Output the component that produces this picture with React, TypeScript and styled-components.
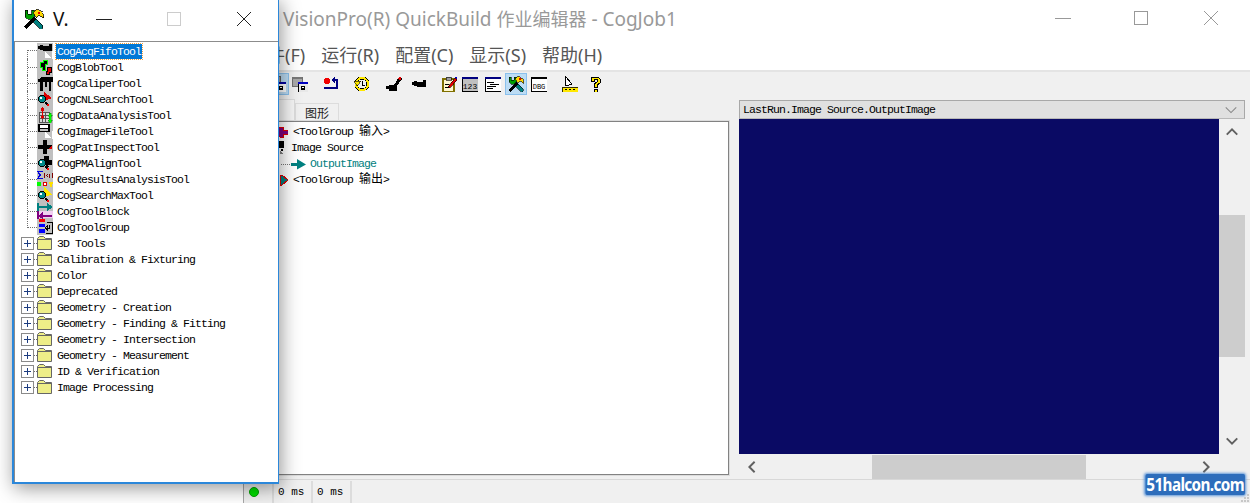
import React from "react";
import styled, { createGlobalStyle } from "styled-components";

const GlobalStyle = createGlobalStyle`
  html, body {
    margin: 0;
    height: 100%;
    background: #fff;
    overflow: hidden;
  }
  #root {
    width: 1250px;
    height: 503px;
    position: relative;
    overflow: hidden;
  }
`;

const UI_FONT = `"Noto Sans", "Noto Sans CJK SC", sans-serif`;
const BITMAP_FONT = `"Liberation Mono", "Noto Sans CJK SC", monospace`;

/* ---------- pixel icons ---------- */

const PixelSvg = styled.svg<{ $bg?: string }>`
  display: block;
  flex: none;
  shape-rendering: crispEdges;
  background: ${({ $bg }) => $bg || "transparent"};
`;

const Icon: React.FC<{ size?: number; bg?: string; children: React.ReactNode }> = ({
  size = 16,
  bg,
  children,
}) => (
  <PixelSvg width={size} height={size} viewBox="0 0 16 16" $bg={bg}>
    {children}
  </PixelSvg>
);

const Magnifier = () => (
  <>
    <circle cx="5" cy="8" r="3.6" fill="#008b8b" stroke="#000" strokeWidth="1.4" />
    <rect x="3" y="6" width="2" height="2" fill="#fff" />
    <path d="M8 11h2v1h1v1h1v2h-2v-1H9v-1H8z" fill="#000" />
    <rect x="10" y="13" width="2" height="2" fill="#f00" />
  </>
);

const SelectArrow = () => (
  <path d="M8 9h1v1h1v1h1v1h1v1h1v1h1v1H8zM15 8h1v8h-1z" fill="#fff" />
);

const Hammers = () => (
  <>
    <path d="M6 7l2-1 7 7v2l-1 1h-1L6 9z" fill="#008080" stroke="#000" strokeWidth="0.6" />
    <path d="M1 1h2v3h3V1h2v5L6 8H3L1 6z" fill="#00a000" stroke="#000" strokeWidth="0.6" />
    <path d="M8 6l2 2-8 8-2-2z" fill="#000" />
    <path d="M7 3l3-3 5 3 1 4h-1l-3-2-2 2z" fill="#ffd800" stroke="#000" strokeWidth="0.6" />
    <rect x="11" y="2" width="2" height="2" fill="#e00000" />
  </>
);

const toolIcons: Record<string, React.ReactNode> = {
  acq: (
    <>
      <path d="M3 2h3v1h6V1h3v7H6V7H3zM1 3h2v3H1z" fill="#000" />
      <SelectArrow />
    </>
  ),
  blob: (
    <>
      <path d="M3 3h3V1h4v4H8v6H5V8H3z" fill="#000" stroke="#0f0" strokeWidth="1" />
      <path d="M10 8h4v5h-2v2H9v-3h1z" fill="#e00000" stroke="#000" strokeWidth="1" />
    </>
  ),
  caliper: <path d="M4 2h12v5h-2v9h-2V7h-2v5H8V7H6v9H3V7H1V4h2z" fill="#000" />,
  cnl: (
    <>
      <path d="M7 1l8 6-6 2-1 2z" fill="#e00000" />
      <Magnifier />
    </>
  ),
  data: (
    <>
      <path d="M2 5h10v10H2zM2 8h10M2 11h10M5 5v10M8 5v10" fill="#d8d8d8" stroke="#555" strokeWidth="1" />
      <path d="M5 0h1v1h1v3H6v5h1v2H6v1H5v-1H4V9h1V4H4V1h1z" fill="#e00000" />
      <path d="M12 6h2v2h1v1h-1v4h1v1h-1v2h-2v-2h-1v-1h1V9h-1V8h1z" fill="#0f0" stroke="#008000" strokeWidth="0.4" />
    </>
  ),
  file: (
    <>
      <path d="M1 1h11l1 1v7H1z" fill="#000" />
      <rect x="3" y="2" width="8" height="3" fill="#fff" />
      <rect x="3" y="6" width="8" height="2" fill="#c0c0c0" />
      <SelectArrow />
    </>
  ),
  pat: (
    <>
      <path d="M6 1h4v5h5v4h-5v5H6v-5H1V6h5z" fill="#000" />
      <path d="M11 6h4v4h-4z" fill="#e00000" />
      <path d="M11 6h4L11 10z" fill="#000" />
    </>
  ),
  pm: (
    <>
      <path d="M7 1h5v4h3v5h-4l1 2h-3V8H6V4h1z" fill="#000" />
      <Magnifier />
    </>
  ),
  results: (
    <>
      <path d="M0 0h6v1H2l2 3-2 3h4v1H0l2-4z" fill="#0000e0" />
      <rect x="0" y="11" width="4" height="4" fill="#0f0" />
      <rect x="6" y="11" width="4" height="4" fill="#e00000" />
      <rect x="7" y="12" width="2" height="2" fill="#fff" />
      <path d="M12 11h4v2h-1v3h-2v-3h-1z" fill="#ffe000" />
      <path d="M7 2h1v5H7zM15 2h1v5h-1zM9 4h1v1H9zM10 3h1v1h-1zM10 5h1v1h-1zM12 3h1v4h-1z" fill="#800000" />
    </>
  ),
  search: (
    <>
      <path d="M7 0l8 8-6 1-1 2z" fill="#ffe800" />
      <Magnifier />
    </>
  ),
  block: (
    <>
      <rect x="0" y="0" width="2" height="16" fill="#008080" />
      <rect x="0" y="8" width="2" height="8" fill="#800080" />
      <rect x="2" y="8" width="14" height="7" fill="#f0d0f0" />
      <path d="M2 3h8V0l6 4-6 4V5H2z" fill="#008080" />
      <path d="M6 9v3h9v2H6v2l-5-3z" fill="#800080" />
    </>
  ),
  group: (
    <>
      <rect x="2" y="0" width="6" height="3" fill="#f00" />
      <rect x="2" y="5" width="6" height="3" fill="#00f" />
      <rect x="2" y="10" width="6" height="4" fill="#00f" />
      <path d="M10 3h5v11H9" fill="none" stroke="#000" />
      <path d="M9 9h3V6M8 9l2-2v4z" fill="none" stroke="#000" />
    </>
  ),
  input: <path d="M8 3h3v3h5v4h-5v3H8l-4-5z" fill="#800080" stroke="#e00000" strokeWidth="1" />,
  source: (
    <>
      <path d="M9 1h5v7H9zM11 9h2v2h-2z" fill="#000" />
      <path d="M10 11h1v1h1v1h1v1h-3z" fill="#808080" />
    </>
  ),
  output: <path d="M8 3h2l6 5-6 5H8z" fill="#008080" stroke="#e00000" strokeWidth="1" />,
};

const IconLabel = styled.text<{ $narrow?: boolean }>`
  font-family: "Liberation Mono", monospace;
  font-size: ${({ $narrow }) => ($narrow ? 7 : 8)}px;
  fill: #000;
  shape-rendering: auto;
`;

const barIcons: React.ReactNode[] = [
  <>
    <rect x="0" y="0" width="10" height="10" fill="#a0a0a0" stroke="#606060" />
    <rect x="6" y="6" width="10" height="10" fill="#fff" stroke="#000" />
    <rect x="6" y="6" width="10" height="2" fill="#0000a0" />
    <rect x="9" y="10" width="4" height="4" fill="#000" />
    <rect x="10" y="11" width="2" height="1" fill="#fff" />
  </>,
  <>
    <rect x="0" y="1" width="10" height="9" fill="#a8a8a8" stroke="#707070" strokeWidth="1" />
    <rect x="0" y="1" width="10" height="2" fill="#777" />
    <rect x="6" y="6" width="10" height="10" fill="#e8e8e8" stroke="#000" strokeWidth="1" />
    <rect x="6" y="6" width="10" height="2" fill="#0000c0" />
    <rect x="9" y="10" width="4" height="4" fill="#000" />
    <rect x="10" y="11" width="2" height="1" fill="#fff" />
  </>,
  <>
    <path d="M0 13h14V3H11V0L7 4l4 4V5h1v6H0z" fill="#000080" />
    <path d="M7 4l4-4v8z" fill="#000080" />
    <circle cx="3" cy="5" r="3" fill="#f00000" />
  </>,
  <>
    <circle cx="8" cy="8" r="6" fill="none" stroke="#000" strokeWidth="3" />
    <circle cx="8" cy="8" r="6" fill="none" stroke="#ffe800" strokeWidth="2" />
    <path d="M0 5h7L3 10z" fill="#ffe800" stroke="#000" strokeWidth="0.6" />
    <path d="M8 5v4h3" fill="none" stroke="#000" />
  </>,
  <>
    <path d="M0 10h3V9h8v6H3v-2H0z" fill="#000" />
    <path d="M8 9l5-8h2l1 2-5 7z" fill="#000" />
    <path d="M11 3l2-2h2v3z" fill="#e00000" />
  </>,
  <path d="M3 5h3v1h6V4h3v7H6v-1H3zM1 6h2v3H1z" fill="#000" />,
  <>
    <rect x="1" y="3" width="11" height="13" fill="#fff8d0" stroke="#807000" strokeWidth="1.4" />
    <rect x="4" y="1" width="5" height="3" fill="#a0a0a0" stroke="#000" strokeWidth="0.6" />
    <path d="M3 8h4M3 11h4" stroke="#000" />
    <path d="M6 11l7-9 2 2-7 8z" fill="#e00000" stroke="#000" strokeWidth="0.6" />
    <path d="M12 1h3v3z" fill="#0000c0" />
  </>,
  <>
    <rect x="0" y="1" width="16" height="14" fill="#c0c0c0" stroke="#000" />
    <rect x="0" y="1" width="16" height="2" fill="#000080" />
    <IconLabel x="8" y="13" textAnchor="middle">123</IconLabel>
  </>,
  <>
    <rect x="0" y="1" width="16" height="14" fill="#fff" stroke="#000" />
    <rect x="0" y="1" width="16" height="2" fill="#000080" />
    <path d="M2 6h7M5 8h9M2 10h9M2 12h6" stroke="#000" />
  </>,
  <Hammers />,
  <>
    <rect x="0" y="1" width="16" height="14" fill="#fff" stroke="#000" />
    <rect x="0" y="1" width="16" height="2" fill="#000" />
    <IconLabel x="8" y="12.5" textAnchor="middle" $narrow>DBG</IconLabel>
  </>,
  <>
    <path d="M3 0l7 8-3 1H3z" fill="#fff" stroke="#000" strokeWidth="1" />
    <rect x="0" y="11" width="16" height="5" fill="#ffe800" stroke="#000" strokeWidth="0.8" />
    <path d="M3 13h2M7 13h2M11 13h2" stroke="#000" />
  </>,
  <>
    <path d="M4 1h7l2 2v4l-3 2v2H7V8l3-2V3H7v2H4z" fill="#ffe800" stroke="#000" />
    <rect x="7" y="13" width="3" height="3" fill="#ffe800" stroke="#000" />
  </>,
];

/* ---------- window chrome ---------- */

const WinGlyph = styled.svg`
  display: block;
`;

const WinControl = styled.div`
  width: 70px;
  display: flex;
  align-items: center;
  justify-content: center;
`;

const WindowControls: React.FC<{ color: string; maxColor: string }> = ({ color, maxColor }) => (
  <>
    <WinControl>
      <WinGlyph width="16" height="16" viewBox="0 0 16 16">
        <path d="M0 8.5h16" stroke={color} />
      </WinGlyph>
    </WinControl>
    <WinControl>
      <WinGlyph width="16" height="16" viewBox="0 0 16 16">
        <rect x="1.5" y="1.5" width="13" height="13" fill="none" stroke={maxColor} />
      </WinGlyph>
    </WinControl>
    <WinControl>
      <WinGlyph width="16" height="16" viewBox="0 0 16 16">
        <path d="M1 1l14 14M15 1L1 15" stroke={color} />
      </WinGlyph>
    </WinControl>
  </>
);

/* ---------- main window ---------- */

const MainWindow = styled.div`
  margin-left: 243px;
  width: 1007px;
  height: 503px;
  display: flex;
  flex-direction: column;
  background: #fff;
  font-family: ${UI_FONT};
`;

const TitleBar = styled.div`
  height: 38px;
  flex: none;
  box-sizing: border-box;
  display: flex;
  align-items: center;
  padding: 0 0 2px 40px;
  color: #999;
  font-size: 19px;
  white-space: pre;
`;

const TitleCjk = styled.span`
  font-size: 18px;
`;

const TitleControls = styled.div`
  margin-left: auto;
  margin-right: 4px;
  display: flex;
  height: 100%;
  & > div:first-child {
    margin-right: 8px;
  }
`;

const MenuBar = styled.div`
  height: 32px;
  flex: none;
  display: flex;
  align-items: center;
  gap: 16px;
  padding-left: 6px;
  color: #555;
  font-size: 18px;
`;

const Toolbar = styled.div`
  height: 27px;
  flex: none;
  display: flex;
  align-items: flex-start;
  background: #f0f0f0;
  border-top: 2px solid #e4e4e4;
  box-sizing: border-box;
  padding: 1px 0 0 24px;
`;

const ToolButton = styled.div<{ $active?: boolean; $gap: number }>`
  width: 22px;
  height: 22px;
  flex: none;
  margin-left: ${({ $gap }) => $gap}px;
  display: flex;
  align-items: center;
  justify-content: center;
  box-sizing: border-box;
  background: ${({ $active }) => ($active ? "#bcdcf4" : "transparent")};
  border: 1px solid ${({ $active }) => ($active ? "#8ac0ec" : "transparent")};
`;

const Body = styled.div`
  flex: 1;
  min-height: 0;
  display: flex;
  background: #f0f0f0;
  padding: 4px 4px 0 4px;
  gap: 10px;
`;

const LeftPane = styled.div`
  width: 482px;
  flex: none;
  display: flex;
  flex-direction: column;
  padding-bottom: 4px;
`;

const TabStrip = styled.div`
  height: 20px;
  flex: none;
  display: flex;
  align-items: flex-end;
  padding-left: 4px;
`;

const Tab = styled.div<{ $selected?: boolean }>`
  box-sizing: border-box;
  width: 44px;
  height: ${({ $selected }) => ($selected ? 22 : 18)}px;
  padding-right: ${({ $selected }) => ($selected ? 18 : 0)}px;
  display: flex;
  align-items: center;
  justify-content: center;
  font-size: 12px;
  color: #222;
  background: ${({ $selected }) => ($selected ? "#f6f6f6" : "#f0f0f0")};
  border: 1px solid #dcdcdc;
  border-bottom: none;
`;

const TreePanel = styled.div`
  flex: 1;
  min-height: 0;
  background: #fff;
  border: 1px solid #828282;
  outline: 1px solid #dcdcdc;
  padding-top: 2px;
`;

const BitmapRow = styled.div<{ $indent: number; $color?: string }>`
  height: 16px;
  line-height: 16px;
  display: flex;
  align-items: center;
  padding-left: ${({ $indent }) => $indent}px;
  font-family: ${BITMAP_FONT};
  font-size: 11.5px;
  letter-spacing: -0.9px;
  color: ${({ $color }) => $color || "#000"};
  white-space: pre;
`;

const RowText = styled.span`
  margin-left: 5px;
`;

const Cjk = styled.span`
  font-size: 12px;
  letter-spacing: 0;
`;

const OutputLink = styled.span`
  width: 26px;
  height: 16px;
  flex: none;
  margin-right: 3px;
  display: block;
`;

const RightPane = styled.div`
  flex: 1;
  min-width: 0;
  display: flex;
  flex-direction: column;
  margin: -1px 1px 0 0;
`;

const ViewHeader = styled.div`
  height: 19px;
  flex: none;
  box-sizing: border-box;
  display: flex;
  align-items: center;
  justify-content: space-between;
  padding: 0 6px 0 3px;
  background: #e0e0e0;
  border: 1px solid #a8a8a8;
  border-bottom-color: #b8b8b8;
  font-family: ${BITMAP_FONT};
  font-size: 11.5px;
  letter-spacing: -0.9px;
  color: #000;
`;

const ViewMiddle = styled.div`
  height: 335px;
  flex: none;
  display: flex;
`;

const Canvas = styled.div`
  flex: 1;
  background: #0a0a64;
`;

const VScroll = styled.div`
  width: 26px;
  flex: none;
  display: flex;
  flex-direction: column;
  background: #f0f0f0;
`;

const ScrollEnd = styled.div`
  height: 26px;
  flex: none;
  display: flex;
  align-items: center;
  justify-content: center;
`;

const VTrackGap = styled.div<{ $size: number }>`
  height: ${({ $size }) => $size}px;
  flex: none;
`;

const VThumb = styled.div`
  flex: none;
  height: 142px;
  background: #cdcdcd;
`;

const HScroll = styled.div`
  height: 24px;
  flex: none;
  margin-top: 1px;
  display: flex;
  margin-right: 26px;
  background: #f0f0f0;
`;

const HEnd = styled.div`
  width: 26px;
  flex: none;
  display: flex;
  align-items: center;
  justify-content: center;
`;

const HGap = styled.div<{ $size: number }>`
  width: ${({ $size }) => $size}px;
  flex: none;
`;

const HThumb = styled.div`
  width: 214px;
  flex: none;
  background: #cdcdcd;
`;

const StatusBar = styled.div`
  height: 24px;
  flex: none;
  display: flex;
  background: #f0f0f0;
  border-top: 1px solid #d8d8d8;
  box-sizing: border-box;
  font-family: ${BITMAP_FONT};
  font-size: 11px;
  color: #000;
`;

const StatusCell = styled.div<{ $width: number }>`
  width: ${({ $width }) => $width}px;
  flex: none;
  box-sizing: border-box;
  display: flex;
  align-items: center;
  padding-left: 4px;
  border-right: 2px solid #dcdcdc;
  margin-top: 1px;
`;

const LedCell = styled(StatusCell)`
  padding-left: 5px;
  border-left: 1px solid #a8a8a8;
`;

const Led = styled.span`
  width: 10px;
  height: 10px;
  border-radius: 50%;
  background: #00e000;
  border: 1px solid #00a000;
  box-sizing: border-box;
`;

const Grip = styled.svg`
  position: absolute;
  right: 0;
  bottom: 0;
`;

/* ---------- floating tool window ---------- */

const FloatWindow = styled.div`
  position: absolute;
  left: 12px;
  top: -2px;
  width: 267px;
  height: 486px;
  box-sizing: border-box;
  display: flex;
  flex-direction: column;
  background: #fff;
  border: 2px solid #2b87da;
  border-right-width: 1px;
  box-shadow: 2px 4px 18px rgba(0, 0, 0, 0.42);
  font-family: ${UI_FONT};
`;

const FloatTitle = styled.div`
  height: 41px;
  flex: none;
  box-sizing: border-box;
  display: flex;
  align-items: center;
  padding: 0 0 4px 10px;
  color: #111;
  font-size: 19px;
`;

const FloatLabel = styled.span`
  margin-left: 9px;
  width: 36px;
`;

const FloatControls = styled.div`
  display: flex;
  height: 100%;
`;

const ToolTree = styled.div`
  flex: 1;
  min-height: 0;
  border-top: 1px solid #8c8c8c;
  border-left: 1px solid #8c8c8c;
  padding-top: 1px;
`;

const TreeRow = styled.div`
  height: 16px;
  display: flex;
  align-items: center;
  font-family: ${BITMAP_FONT};
  font-size: 11.5px;
  letter-spacing: -0.9px;
  color: #000;
  white-space: pre;
`;

const Connector = styled.span<{ $edge?: "first" | "last" }>`
  display: block;
  flex: none;
  box-sizing: border-box;
  width: 10px;
  margin-left: 12px;
  border-left: 1px dotted #707070;
  height: ${({ $edge }) => ($edge ? "9px" : "16px")};
  align-self: ${({ $edge }) => ($edge === "first" ? "flex-end" : "flex-start")};
  &::before {
    content: "";
    display: block;
    height: ${({ $edge }) => ($edge === "first" ? 0 : 8)}px;
    border-bottom: 1px dotted #707070;
  }
`;

const ToolLabel = styled.span<{ $selected?: boolean }>`
  margin-left: 3px;
  padding: 0 1px;
  height: 15px;
  line-height: 15px;
  color: ${({ $selected }) => ($selected ? "#fff" : "#000")};
  background: ${({ $selected }) => ($selected ? "#0078d7" : "transparent")};
  outline: ${({ $selected }) => ($selected ? "1px dotted #f0a040" : "none")};
`;

const Expander = styled.span`
  width: 13px;
  height: 13px;
  flex: none;
  margin-left: 6px;
  box-sizing: border-box;
  border: 1px solid #8a8a8a;
  background: #fff;
  position: relative;
  &::before {
    content: "";
    position: absolute;
    left: 2px;
    right: 2px;
    top: 5px;
    height: 1px;
    background: #1c3c80;
  }
  &::after {
    content: "";
    position: absolute;
    top: 2px;
    bottom: 2px;
    left: 5px;
    width: 1px;
    background: #1c3c80;
  }
`;

const Dash = styled.span`
  width: 3px;
  flex: none;
  border-bottom: 1px dotted #707070;
`;

const Watermark = styled.div`
  position: absolute;
  right: 5px;
  bottom: 8px;
  padding: 0 1px;
  height: 21px;
  line-height: 21px;
  background: #2d6dbb;
  box-shadow: 0 0 3px 1px #5a94d8;
  border-radius: 2px;
  color: #fff;
  font-family: "Noto Sans", sans-serif;
  font-weight: 700;
  font-size: 18px;
  letter-spacing: -0.75px;
  transform: scaleX(0.85);
  transform-origin: right center;
`;

/* ---------- data ---------- */

const tools = [
  ["CogAcqFifoTool", "acq"],
  ["CogBlobTool", "blob"],
  ["CogCaliperTool", "caliper"],
  ["CogCNLSearchTool", "cnl"],
  ["CogDataAnalysisTool", "data"],
  ["CogImageFileTool", "file"],
  ["CogPatInspectTool", "pat"],
  ["CogPMAlignTool", "pm"],
  ["CogResultsAnalysisTool", "results"],
  ["CogSearchMaxTool", "search"],
  ["CogToolBlock", "block"],
  ["CogToolGroup", "group"],
];

const folders = [
  "3D Tools",
  "Calibration & Fixturing",
  "Color",
  "Deprecated",
  "Geometry - Creation",
  "Geometry - Finding & Fitting",
  "Geometry - Intersection",
  "Geometry - Measurement",
  "ID & Verification",
  "Image Processing",
];

const menus = ["文件(F)", "运行(R)", "配置(C)", "显示(S)", "帮助(H)"];
const toolbarGaps = [0, 0, 10, 8, 10, 3, 9, -2, 1, 1, 1, 9, 3];

const Chevron: React.FC<{ dir: "up" | "down" | "left" | "right"; color?: string; w?: number }> = ({
  dir,
  color = "#606060",
  w = 2.2,
}) => {
  const d = {
    up: "M2 11l6-6 6 6",
    down: "M2 5l6 6 6-6",
    left: "M11 2L5 8l6 6",
    right: "M5 2l6 6-6 6",
  }[dir];
  return (
    <svg width="14" height="14" viewBox="0 0 16 16">
      <path d={d} fill="none" stroke={color} strokeWidth={w} />
    </svg>
  );
};

const Folder = () => (
  <svg width="16" height="14" viewBox="0 0 16 14">
    <path d="M.5 13.5v-11l2-2h4l2 2h6v11z" fill="#eeee88" stroke="#666" />
    <path d="M.5 3.5h14" stroke="#666" />
  </svg>
);

const App: React.FC = () => (
  <>
    <GlobalStyle />
    <MainWindow>
      <TitleBar>
        <span>
          VisionPro(R) QuickBuild <TitleCjk>作业编辑器</TitleCjk> - CogJob1
        </span>
        <TitleControls>
          <WindowControls color="#999" maxColor="#999" />
        </TitleControls>
      </TitleBar>
      <MenuBar>
        {menus.map((m) => (
          <span key={m}>{m}</span>
        ))}
      </MenuBar>
      <Toolbar>
        {barIcons.map((icon, i) => (
          <ToolButton key={i} $gap={toolbarGaps[i]} $active={i === 0 || i === 9}>
            <Icon>{icon}</Icon>
          </ToolButton>
        ))}
      </Toolbar>
      <Body>
        <LeftPane>
          <TabStrip>
            <Tab $selected>结果</Tab>
            <Tab>图形</Tab>
          </TabStrip>
          <TreePanel>
            <BitmapRow $indent={24}>
              <Icon>{toolIcons.input}</Icon>
              <RowText>
                {"<ToolGroup "}
                <Cjk>输入</Cjk>
                {">"}
              </RowText>
            </BitmapRow>
            <BitmapRow $indent={22}>
              <Icon>{toolIcons.source}</Icon>
              <RowText>Image Source</RowText>
            </BitmapRow>
            <BitmapRow $indent={33} $color="#008080">
              <OutputLink>
                <svg width="26" height="16" viewBox="0 0 26 16">
                  <path d="M0 8.5h11" stroke="#777" strokeDasharray="1 1" />
                  <path d="M10 7h6V3l9 5.5-9 5V10h-6z" fill="#008080" />
                </svg>
              </OutputLink>
              OutputImage
            </BitmapRow>
            <BitmapRow $indent={24}>
              <Icon>{toolIcons.output}</Icon>
              <RowText>
                {"<ToolGroup "}
                <Cjk>输出</Cjk>
                {">"}
              </RowText>
            </BitmapRow>
          </TreePanel>
        </LeftPane>
        <RightPane>
          <ViewHeader>
            LastRun.Image Source.OutputImage
            <Chevron dir="down" color="#888" w={1.2} />
          </ViewHeader>
          <ViewMiddle>
            <Canvas />
            <VScroll>
              <ScrollEnd>
                <Chevron dir="up" />
              </ScrollEnd>
              <VTrackGap $size={70} />
              <VThumb />
              <VTrackGap $size={71} />
              <ScrollEnd>
                <Chevron dir="down" />
              </ScrollEnd>
            </VScroll>
          </ViewMiddle>
          <HScroll>
            <HEnd>
              <Chevron dir="left" />
            </HEnd>
            <HGap $size={107} />
            <HThumb />
            <HGap $size={107} />
            <HEnd>
              <Chevron dir="right" />
            </HEnd>
          </HScroll>
        </RightPane>
      </Body>
      <StatusBar>
        <LedCell $width={31}>
          <Led />
        </LedCell>
        <StatusCell $width={39}>0 ms</StatusCell>
        <StatusCell $width={39}>0 ms</StatusCell>
      </StatusBar>
    </MainWindow>

    <FloatWindow>
      <FloatTitle>
        <Icon size={20}>
          <Hammers />
        </Icon>
        <FloatLabel>V.</FloatLabel>
        <FloatControls>
          <WindowControls color="#222" maxColor="#ccc" />
        </FloatControls>
      </FloatTitle>
      <ToolTree>
        {tools.map(([name, key], i) => (
          <TreeRow key={name}>
            <Connector $edge={i === 0 ? "first" : i === tools.length - 1 ? "last" : undefined} />
            <Icon bg="#c0c0c0">{toolIcons[key]}</Icon>
            <ToolLabel $selected={i === 0}>{name}</ToolLabel>
          </TreeRow>
        ))}
        {folders.map((name) => (
          <TreeRow key={name}>
            <Expander />
            <Dash />
            <Folder />
            <ToolLabel>{name}</ToolLabel>
          </TreeRow>
        ))}
      </ToolTree>
    </FloatWindow>

    <Watermark>51halcon.com</Watermark>
    <Grip width="10" height="10" viewBox="0 0 10 10">
      <path d="M7 1h2v2H7zM4 4h2v2H4zM7 4h2v2H7zM1 7h2v2H1zM4 7h2v2H4zM7 7h2v2H7z" fill="#c8c8c8" />
    </Grip>
  </>
);

export default App;
